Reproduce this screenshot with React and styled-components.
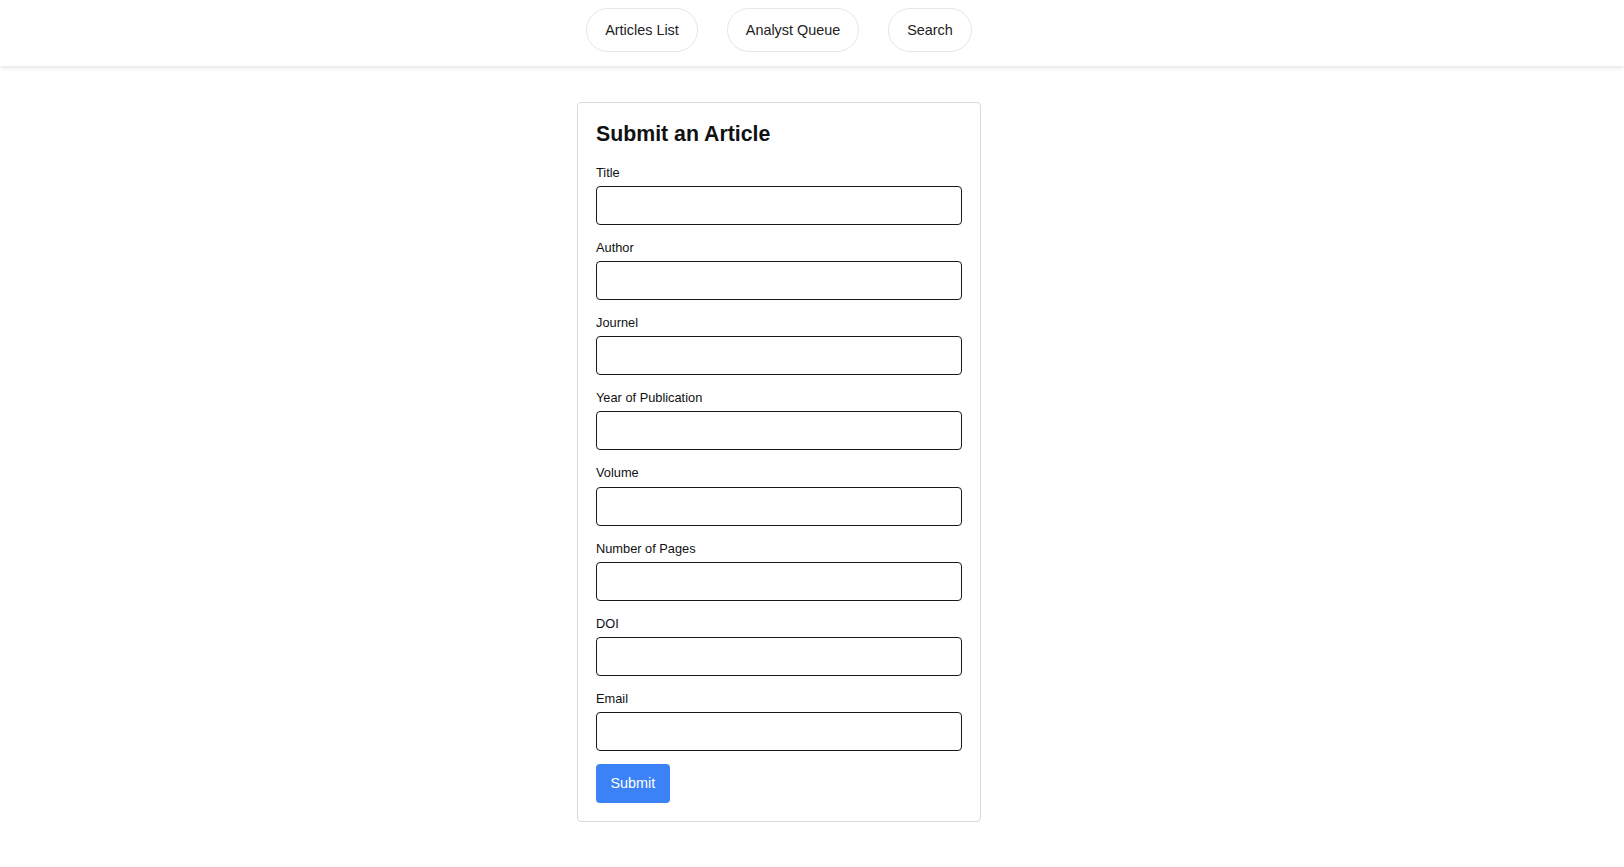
import React from 'react'
import styled, { createGlobalStyle } from 'styled-components'

const GlobalStyle = createGlobalStyle`
  body {
    margin: 0;
    background: #fff;
    font-family: "Liberation Sans", Arial, sans-serif;
    color: #111;
  }
`

const Nav = styled.nav`
  background: #fff;
  box-shadow: 0 2px 4px rgba(0, 0, 0, 0.1);
  padding: 8px 0 14px;
`
const NavInner = styled.div`
  display: flex;
  justify-content: center;
  gap: 29px;
  margin-right: 66px;
`
const NavButton = styled.button`
  font-family: inherit;
  font-size: 14.4px;
  line-height: 16.5px;
  color: #222;
  background: #fff;
  border: 1px solid #e6e6e6;
  border-radius: 22px;
  padding: 12.5px 18px 13px;
  cursor: pointer;
`

const Main = styled.main`
  display: flex;
  justify-content: center;
  padding-top: 36px;
  margin-right: 66px;
`
const Card = styled.div`
  width: 404px;
  box-sizing: border-box;
  border: 1px solid #d9d9d9;
  border-radius: 4px;
  padding: 19px 18px 18px;
`
const Heading = styled.h2`
  margin: 0 0 16px;
  font-size: 21.3px;
  line-height: 24.5px;
  font-weight: 700;
  color: #111;
`
const Field = styled.div`
  display: flex;
  flex-direction: column;
  gap: 4px;
  margin-bottom: 13px;
`
const Label = styled.label`
  font-size: 12.8px;
  line-height: 19.2px;
  color: #111;
`
const Input = styled.input`
  box-sizing: border-box;
  width: 100%;
  height: 39px;
  border: 1px solid #1a1a1a;
  border-radius: 4px;
  padding: 8px;
  font-family: inherit;
  font-size: 14px;
`
const SubmitButton = styled.button`
  font-family: inherit;
  font-size: 14.4px;
  line-height: 16.5px;
  color: #fff;
  background: #3b82f6;
  border: none;
  border-radius: 4px;
  padding: 11px 14.5px;
  margin-top: 3px;
  cursor: pointer;
  display: block;
`

const fields = ['Title', 'Author', 'Journel', 'Year of Publication', 'Volume', 'Number of Pages', 'DOI', 'Email']

const App = () => (
  <>
    <GlobalStyle />
    <Nav>
      <NavInner>
        <NavButton>Articles List</NavButton>
        <NavButton>Analyst Queue</NavButton>
        <NavButton>Search</NavButton>
      </NavInner>
    </Nav>
    <Main>
      <Card>
        <Heading>Submit an Article</Heading>
        <form onSubmit={ e => e.preventDefault() }>
          { fields.map(name => (
            <Field key={ name }>
              <Label>{ name }</Label>
              <Input type="text" />
            </Field>
          )) }
          <SubmitButton type="submit">Submit</SubmitButton>
        </form>
      </Card>
    </Main>
  </>
)

export default App
